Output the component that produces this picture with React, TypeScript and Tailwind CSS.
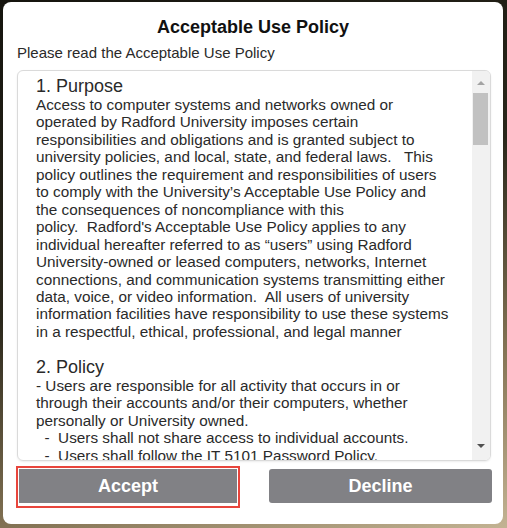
const purpose = [
  'Access to computer systems and networks owned or',
  'operated by Radford University imposes certain',
  'responsibilities and obligations and is granted subject to',
  'university policies, and local, state, and federal laws.   This',
  'policy outlines the requirement and responsibilities of users',
  'to comply with the University’s Acceptable Use Policy and',
  'the consequences of noncompliance with this',
  "policy.  Radford's Acceptable Use Policy applies to any",
  'individual hereafter referred to as “users” using Radford',
  'University-owned or leased computers, networks, Internet',
  'connections, and communication systems transmitting either',
  'data, voice, or video information.  All users of university',
  'information facilities have responsibility to use these systems',
  'in a respectful, ethical, professional, and legal manner',
];

const policy = [
  '- Users are responsible for all activity that occurs in or',
  'through their accounts and/or their computers, whether',
  'personally or University owned.',
  '  -  Users shall not share access to individual accounts.',
  '  -  Users shall follow the IT 5101 Password Policy.',
];

function Lines({ lines }: { lines: string[] }) {
  return (
    <>
      {lines.map((l, i) => (
        <div key={i} className="whitespace-pre text-[15.3px] leading-[17.45px]">
          {l}
        </div>
      ))}
    </>
  );
}

function ScrollBar() {
  return (
    <div className="flex w-[18px] flex-col bg-[#f1f1f1] pr-px">
      <div className="flex h-[17px] items-end justify-center pb-[3px]">
        <div className="h-0 w-0 border-x-[4px] border-b-[4px] border-x-transparent border-b-[#a3a3a3]" />
      </div>
      <div className="mx-px mt-[5px] h-[52px] bg-[#c1c1c1]" />
      <div className="flex-1" />
      <div className="flex h-[17px] items-start justify-center pt-[1px]">
        <div className="h-0 w-0 border-x-[4px] border-t-[4px] border-x-transparent border-t-[#505050]" />
      </div>
    </div>
  );
}

export default function App() {
  return (
    <div
      className="h-[528px] w-[507px] overflow-hidden bg-[linear-gradient(160deg,#15140e_0%,#2a271b_45%,#857455_75%,#c3b393_100%)] pl-[3px] pt-[2px]"
      style={{ fontFamily: '"Liberation Sans", Arial, sans-serif' }}
    >
      <div className="flex h-[522px] w-[500px] flex-col rounded-[8px] bg-white pt-[14px] text-[#2a2a2a]">
        <div className="text-center text-[18px] font-bold leading-[22px] text-[#111]">
          Acceptable Use Policy
        </div>
        <div className="ml-[14px] mt-[6px] text-[15px] leading-[17px]">
          Please read the Acceptable Use Policy
        </div>
        <div className="ml-[14px] mt-[9px] flex h-[391px] w-[474px] overflow-hidden rounded-[6px] border border-[#dadada] shadow-[0_1px_2px_rgba(0,0,0,0.08)]">
          <div className="flex-1 overflow-hidden pl-[18px] pt-[6px]">
            <div className="text-[18px] leading-[19px]">1. Purpose</div>
            <Lines lines={purpose} />
            <div className="h-[17.45px]" />
            <div className="text-[18px] leading-[19px]">2. Policy</div>
            <Lines lines={policy} />
          </div>
          <ScrollBar />
        </div>
        <div className="ml-[13px] mt-[5px] flex w-[476px] items-start justify-between">
          <div className="w-[224px] border-2 border-[#e8453c] p-px pb-[3px]">
            <button className="flex h-[34px] w-full items-center justify-center bg-[#818185] text-[18px] font-bold text-white">
              Accept
            </button>
          </div>
          <button className="mt-[3px] flex h-[34px] w-[223px] items-center justify-center rounded-[3px] bg-[#818185] text-[18px] font-bold text-white">
            Decline
          </button>
        </div>
      </div>
    </div>
  );
}
